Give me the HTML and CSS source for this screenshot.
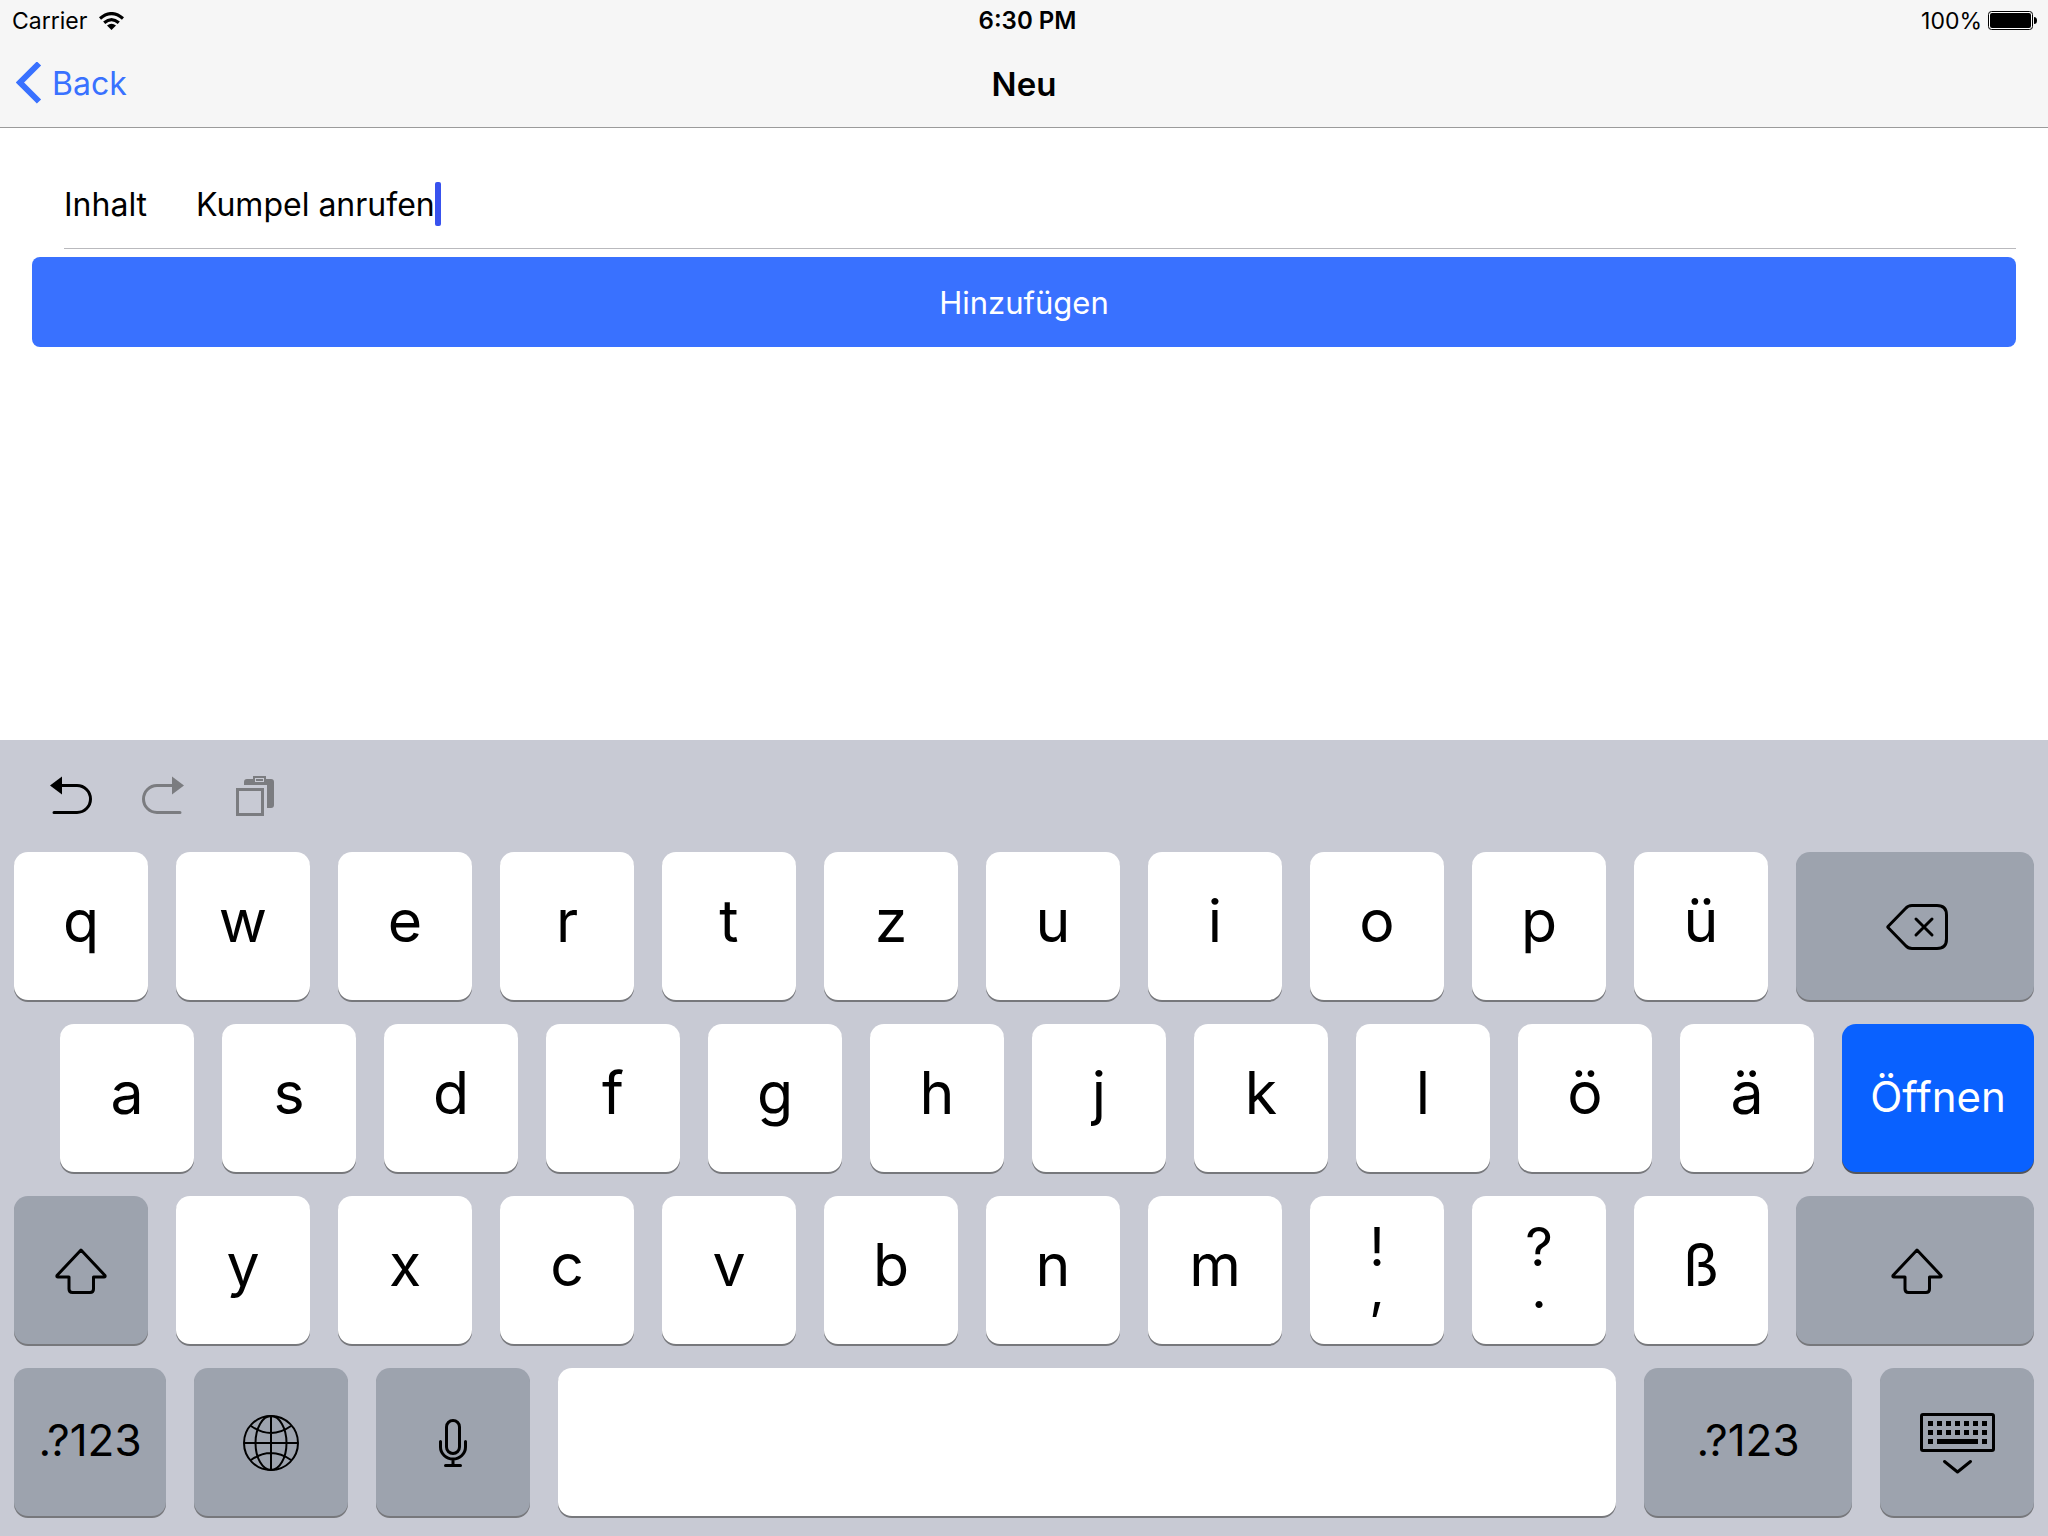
FILE: index.html
```html
<!DOCTYPE html>
<html lang="de">
<head>
<meta charset="utf-8">
<meta name="viewport" content="width=device-width, initial-scale=1">
<title>Neu</title>
<link rel="stylesheet" href="styles.css">
</head>
<body>
<svg class="sprites" aria-hidden="true">
  <symbol id="shift" viewBox="0 0 52 46"><path d="M26 2 50 27.500q.5 1.500-1 1.500H38.500V41q0 3.500-3.500 3.500H17.500q-3.500 0-3.500-3.500V29H3q-1.500 0-1-1.500Z" fill="none" stroke="currentColor" stroke-width="3" stroke-linejoin="round"/></symbol>
</svg>
<header class="header">
  <div class="status">
    <div class="status-side">
      <span>Carrier</span>
      <svg class="wifi" viewBox="0 0 25 18" aria-hidden="true"><g fill="none" stroke="currentColor" stroke-width="3.200"><path d="M1 6.500Q12.500-3.300 24 6.500"/><path d="M5.200 10.800Q12.500 4.500 19.800 10.800"/></g><path d="M8 13.600Q12.500 10 17 13.600L12.500 18Z" fill="currentColor"/></svg>
    </div>
    <div class="clock">6:30 PM</div>
    <div class="status-side status-end">
      <span>100%</span>
      <svg class="battery" viewBox="0 0 49 19" aria-hidden="true"><rect x=".5" y=".5" width="44" height="18" rx="3" fill="#fff" stroke="currentColor"/><rect x="2" y="2" width="41" height="15" rx="2" fill="currentColor"/><path d="M46 6q3 0 3 3.500T46 13Z" fill="currentColor"/></svg>
    </div>
  </div>
  <nav class="nav">
    <a class="back" href="#"><svg class="chevron" viewBox="0 0 26 43" aria-hidden="true"><path d="M23 1.500 4 20.500 23 39.500" fill="none" stroke="currentColor" stroke-width="6"/></svg>Back</a>
    <h1 class="title">Neu</h1>
  </nav>
</header>
<main class="main">
  <form class="form">
    <div class="field">
      <label class="label" for="inhalt">Inhalt</label>
      <input class="input" id="inhalt" type="text" size="13" value="Kumpel anrufen"><span class="caret"></span>
    </div>
    <button class="submit" type="button">Hinzufügen</button>
  </form>
</main>
<section class="keyboard" aria-label="Tastatur">
  <div class="tools">
    <button class="tool" type="button" aria-label="Widerrufen"><svg viewBox="0 0 42 40"><path d="M11 9.500H27a13.500 13.500 0 0 1 0 27H4" fill="none" stroke="currentColor" stroke-width="3" stroke-linecap="round"/><path d="M0 9.500 12 .5V18.500Z" fill="currentColor"/></svg></button>
    <button class="tool" type="button" aria-label="Wiederholen" disabled><svg viewBox="0 0 42 40"><path d="M31 9.500H15a13.500 13.500 0 0 0 0 27H38" fill="none" stroke="currentColor" stroke-width="3" stroke-linecap="round"/><path d="M42 9.500 30 .5V18.500Z" fill="currentColor"/></svg></button>
    <button class="tool" type="button" aria-label="Einsetzen" disabled><svg viewBox="0 0 42 40"><path d="M3.500 13.500H28.500V38.500H3.500Z" fill="none" stroke="currentColor" stroke-width="3"/><path d="M10 9V6q0-3 3-3h6V0h13v3h5q3 0 3 3v23q0 3-3 3h-4V9ZM21 2v4h9V2Z" fill="currentColor" fill-rule="evenodd"/><path d="M22 3h7v2h-7Z" fill="currentColor"/></svg></button>
  </div>
  <div class="row">
    <button class="key" type="button">q</button><button class="key" type="button">w</button><button class="key" type="button">e</button><button class="key" type="button">r</button><button class="key" type="button">t</button><button class="key" type="button">z</button><button class="key" type="button">u</button><button class="key" type="button">i</button><button class="key" type="button">o</button><button class="key" type="button">p</button><button class="key" type="button">ü</button>
    <button class="key dark wide" type="button" aria-label="Löschen"><svg width="62" height="46" viewBox="0 0 62 46"><path d="M2 23.500Q1.500 23 2 22.500L19.500 4.500Q22 1.500 26 1.500H51q9.500 0 9.500 9.500V35q0 9.500-9.500 9.500H26q-4 0-6.500-3Z M30 15 46 31M46 15 30 31" fill="none" stroke="currentColor" stroke-width="3" stroke-linecap="round" stroke-linejoin="round"/></svg></button>
  </div>
  <div class="row row-indent">
    <button class="key" type="button">a</button><button class="key" type="button">s</button><button class="key" type="button">d</button><button class="key" type="button">f</button><button class="key" type="button">g</button><button class="key" type="button">h</button><button class="key" type="button">j</button><button class="key" type="button">k</button><button class="key" type="button">l</button><button class="key" type="button">ö</button><button class="key" type="button">ä</button>
    <button class="key go" type="button">Öffnen</button>
  </div>
  <div class="row">
    <button class="key dark" type="button" aria-label="Umschalt"><svg width="52" height="46"><use href="#shift"/></svg></button>
    <button class="key" type="button">y</button><button class="key" type="button">x</button><button class="key" type="button">c</button><button class="key" type="button">v</button><button class="key" type="button">b</button><button class="key" type="button">n</button><button class="key" type="button">m</button>
    <button class="key double" type="button"><span>!<br>,</span></button>
    <button class="key double" type="button"><span>?<br>.</span></button>
    <button class="key" type="button">ß</button>
    <button class="key dark wide" type="button" aria-label="Umschalt"><svg width="52" height="46"><use href="#shift"/></svg></button>
  </div>
  <div class="row">
    <button class="key dark mode" type="button">.?123</button>
    <button class="key dark small" type="button" aria-label="Sprache"><svg width="56" height="56" viewBox="0 0 56 56"><g fill="none" stroke="currentColor" stroke-width="2"><circle cx="28" cy="28" r="27"/><ellipse cx="28" cy="28" rx="15.500" ry="27"/><path d="M28 1V55M1 28H55M8 11Q28 25 48 11M8 45Q28 31 48 45"/></g></svg></button>
    <button class="key dark small" type="button" aria-label="Diktieren"><svg width="28" height="48" viewBox="0 0 28 48"><g fill="none" stroke="currentColor" stroke-width="3" stroke-linecap="round"><rect x="7.500" y="1.500" width="13" height="33" rx="6.500"/><path d="M1.500 22.500V28a12.500 12 0 0 0 25 0V22.500M14 40V46M6.500 46.500H21.500"/></g></svg></button>
    <button class="key space" type="button" aria-label="Leerzeichen"></button>
    <button class="key dark mode mode-wide" type="button">.?123</button>
    <button class="key dark small hide" type="button" aria-label="Tastatur ausblenden"><svg width="75" height="62" viewBox="0 0 75 62"><g fill="none" stroke="currentColor" stroke-width="3"><rect x="1.500" y="1.500" width="72" height="36" rx="1.500"/><path d="M24.500 48.500 37.500 59 50.500 48.500" stroke-linecap="round" stroke-linejoin="round"/></g><path d="M8 10.500H67M8 19.500H67" fill="none" stroke="currentColor" stroke-width="5" stroke-dasharray="5 4"/><path d="M8 28.500h5M17 28.500H58M62 28.500h5" fill="none" stroke="currentColor" stroke-width="5"/></svg></button>
  </div>
</section>
</body>
</html>
```
FILE: styles.css
```css
* { box-sizing: border-box; }

body {
  margin: 0;
  min-height: 100vh;
  display: flex;
  flex-direction: column;
  background: #fff;
  color: #000;
  font-family: Inter, "Liberation Sans", sans-serif;
  font-size: 32px;
}

button, input { font: inherit; color: inherit; border: 0; padding: 0; margin: 0; }
svg { display: block; flex: none; }
.sprites { position: absolute; width: 0; height: 0; }

/* Status bar and navigation bar */
.header { background: #f6f6f6; border-bottom: 1px solid #9b9b9b; }
.status {
  height: 40px;
  padding: 1px 11px 0 12px;
  display: grid;
  grid-template-columns: 1fr auto 1fr;
  align-items: center;
  font-size: 23px;
}
.status-side { display: flex; align-items: center; gap: 12px; }
.status-end { justify-content: flex-end; gap: 6px; }
.clock { padding-left: 6px; font-size: 24px; font-weight: 600; }
.wifi { width: 25px; height: 18px; }
.battery { width: 49px; height: 19px; }
.nav {
  height: 87px;
  padding: 0 16px;
  display: grid;
  grid-template-columns: 1fr auto 1fr;
  align-items: center;
}
.back { display: flex; align-items: center; gap: 10px; color: #3971ff; text-decoration: none; }
.chevron { width: 26px; height: 43px; }
.title { margin: 0; font-size: 33px; line-height: 38px; font-weight: 600; }

/* Form */
.main { flex: 1; padding: 32px; }
.form { display: flex; flex-direction: column; gap: 8px; }
.field {
  height: 89px;
  margin-left: 32px;
  display: flex;
  align-items: center;
  border-bottom: 1px solid #b9b9bd;
}
.label { width: 132px; }
.input { field-sizing: content; background: none; outline: 0; }
.caret { width: 6px; height: 44px; border-radius: 2px; background: #3852ee; }
.submit { height: 90px; border-radius: 8px; background: #3971ff; color: #fff; font-size: 31px; }

/* Keyboard */
.keyboard {
  padding: 0 14px 20px;
  display: flex;
  flex-direction: column;
  gap: 24px;
  background: #c8cad4;
}
.tools { height: 88px; padding: 24px 36px 0; display: flex; align-items: center; gap: 50px; }
.tool { width: 42px; height: 40px; background: none; }
.tool:disabled { color: #7b7c80; }
.row { display: flex; gap: 28px; }
.row-indent { padding-left: 46px; }
.key {
  flex: 134 1 0;
  min-width: 0;
  height: 148px;
  padding-bottom: 11px;
  display: flex;
  align-items: center;
  justify-content: center;
  border-radius: 14px;
  background: #fff;
  box-shadow: 0 2px 0 #77787c;
  font-size: 59px;
}
.dark { background: #9da3ae; padding: 1px 0 0; }
.wide { flex-grow: 238; }
.wide svg { margin-left: 3px; }
.go { flex-grow: 192; padding-bottom: 4px; background: #0961ff; box-shadow: 0 2px 0 #55565a; color: #fff; font-size: 42px; }
.double { padding-bottom: 4px; font-size: 54px; line-height: 42px; }
.mode { flex-grow: 152; padding: 0 0 4px; font-size: 44px; }
.mode-wide { flex-grow: 208; }
.small { flex-grow: 154; }
.hide { padding-top: 4px; }
.space { flex-grow: 1058; }
```
